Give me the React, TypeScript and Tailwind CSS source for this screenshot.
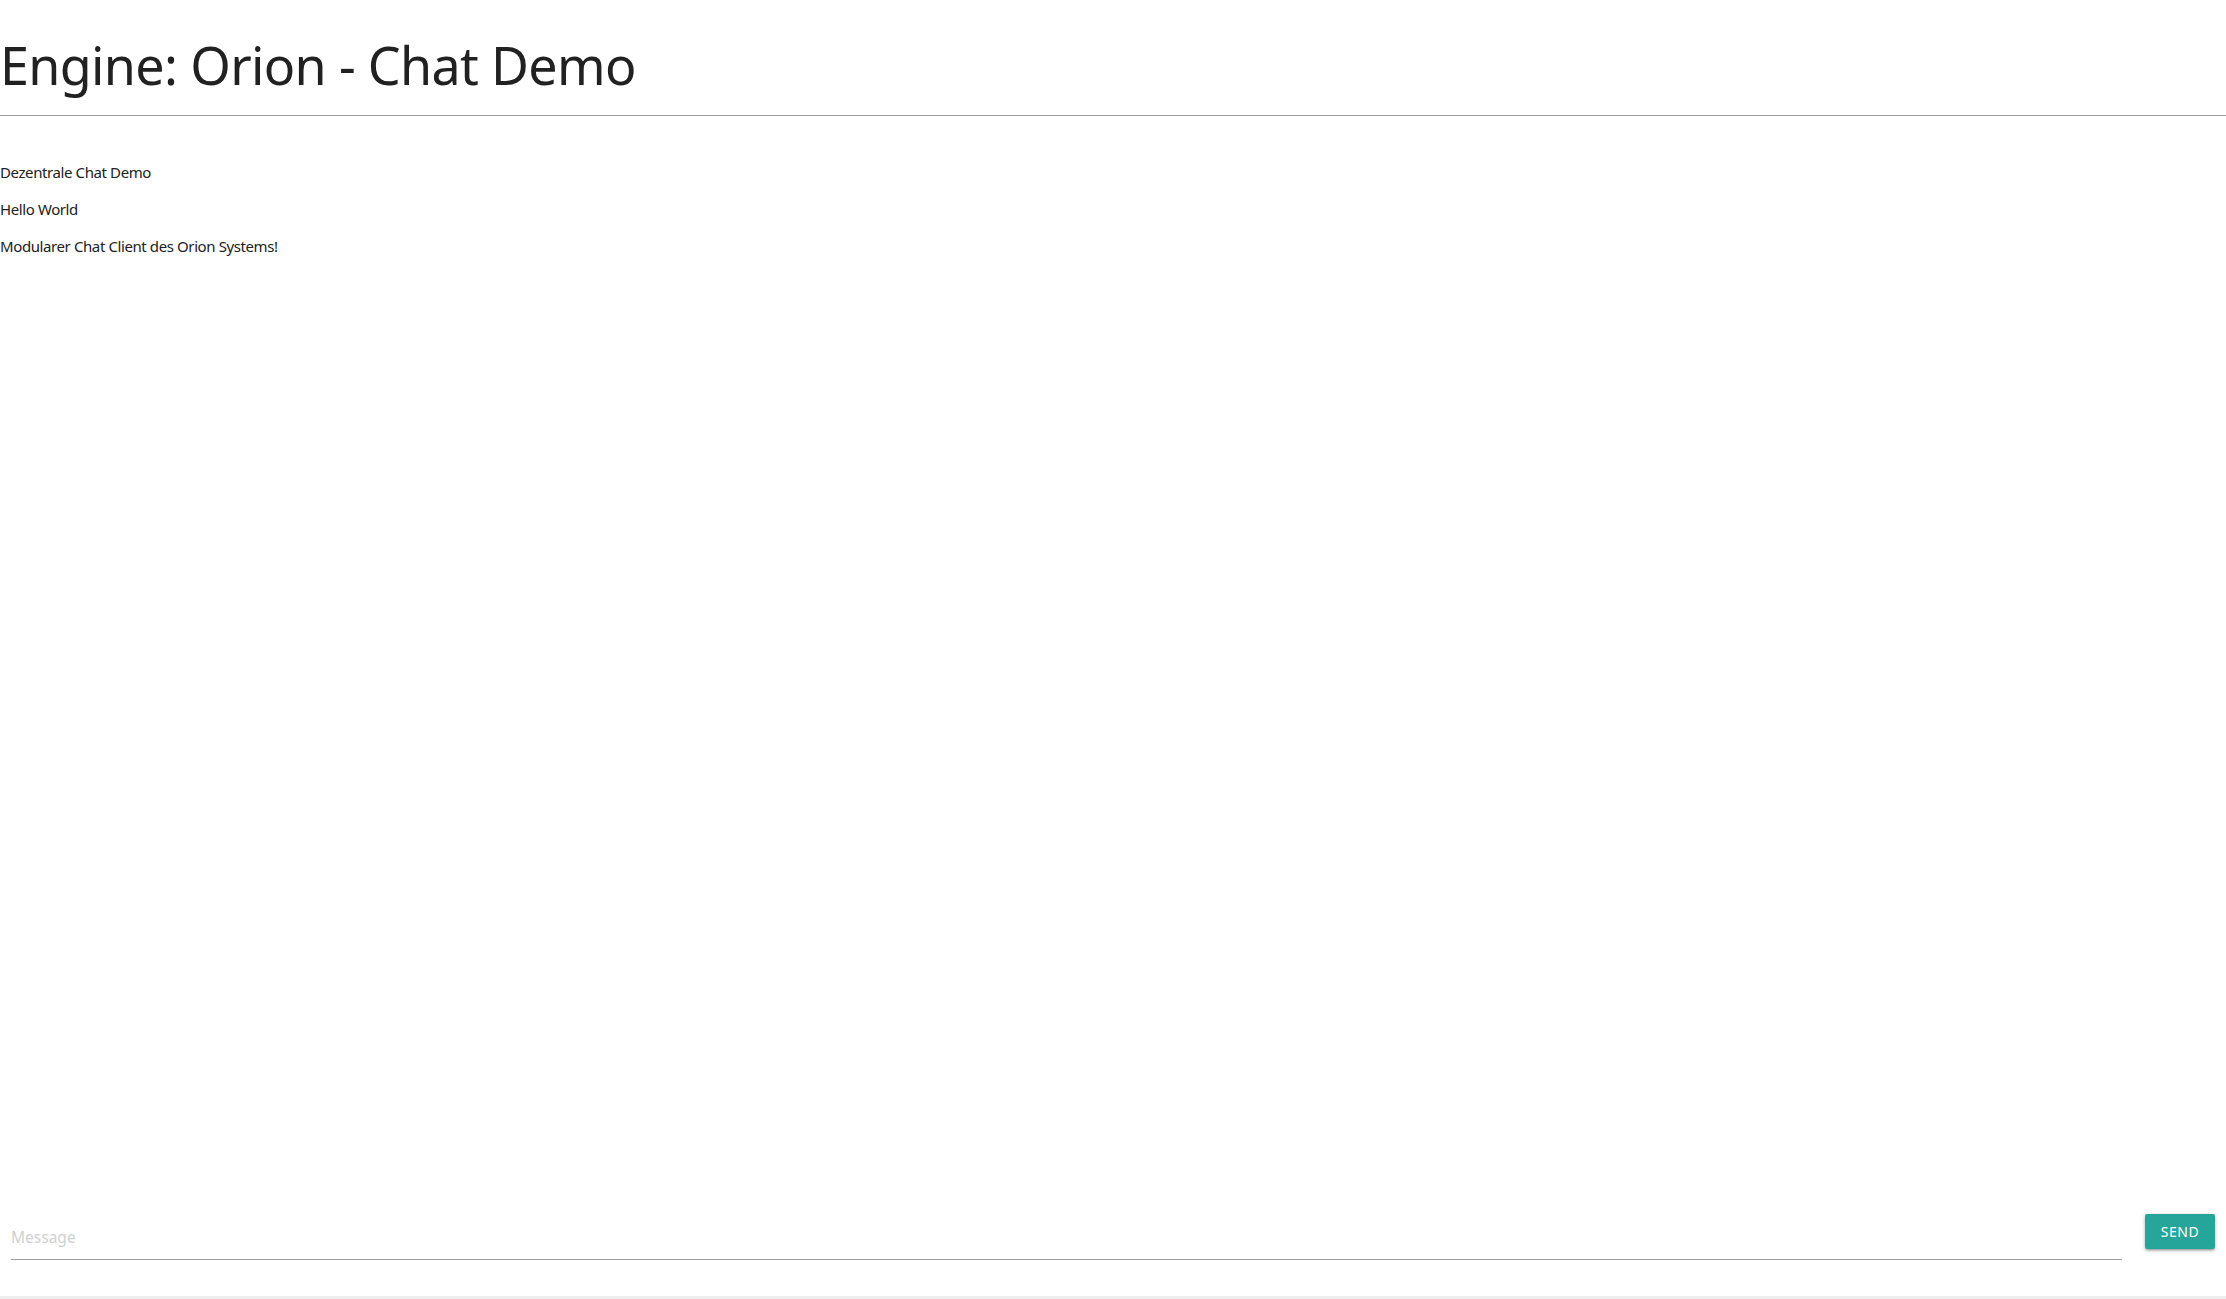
import React from "react";

export default function App() {
  const messages = [
    "Dezentrale Chat Demo",
    "Hello World",
    "Modularer Chat Client des Orion Systems!",
  ];
  return (
    <div
      className="flex h-screen w-full flex-col bg-white text-[#212121]"
      style={{ fontFamily: '"Noto Sans", "Open Sans", sans-serif' }}
    >
      <div className="h-[115px] shrink-0">
        <h1 className="mt-[39px] text-[52px] font-normal leading-none tracking-[-0.65px] text-[#212121]">
          Engine: Orion - Chat Demo
        </h1>
      </div>
      <div className="h-px shrink-0 bg-[#9e9e9e]" />
      <div className="mt-[45px] flex flex-col gap-[15px]">
        {messages.map((m) => (
          <p key={m} className="text-[15px] leading-[22px] tracking-[-0.4px] text-[#212121]">
            {m}
          </p>
        ))}
      </div>
      <div className="flex-1" />
      <div className="flex h-[46px] shrink-0 gap-[23px] px-[11px]">
        <input
          type="text"
          placeholder="Message"
          className="h-[45px] flex-1 self-end border-b border-[#9e9e9e] bg-transparent text-[15.5px] text-[#212121] outline-none placeholder:text-[#d0d0d0]"
        />
        <button className="h-[35px] w-[70px] self-start rounded-[2px] bg-[#26a69a] text-[14px] tracking-[0.5px] text-white shadow-[0_2px_2px_0_rgba(0,0,0,0.14),0_3px_1px_-2px_rgba(0,0,0,0.12),0_1px_5px_0_rgba(0,0,0,0.2)]">
          SEND
        </button>
      </div>
      <div className="h-[36px] shrink-0" />
      <div className="h-[3px] shrink-0 bg-[#eeeeee]" />
    </div>
  );
}
